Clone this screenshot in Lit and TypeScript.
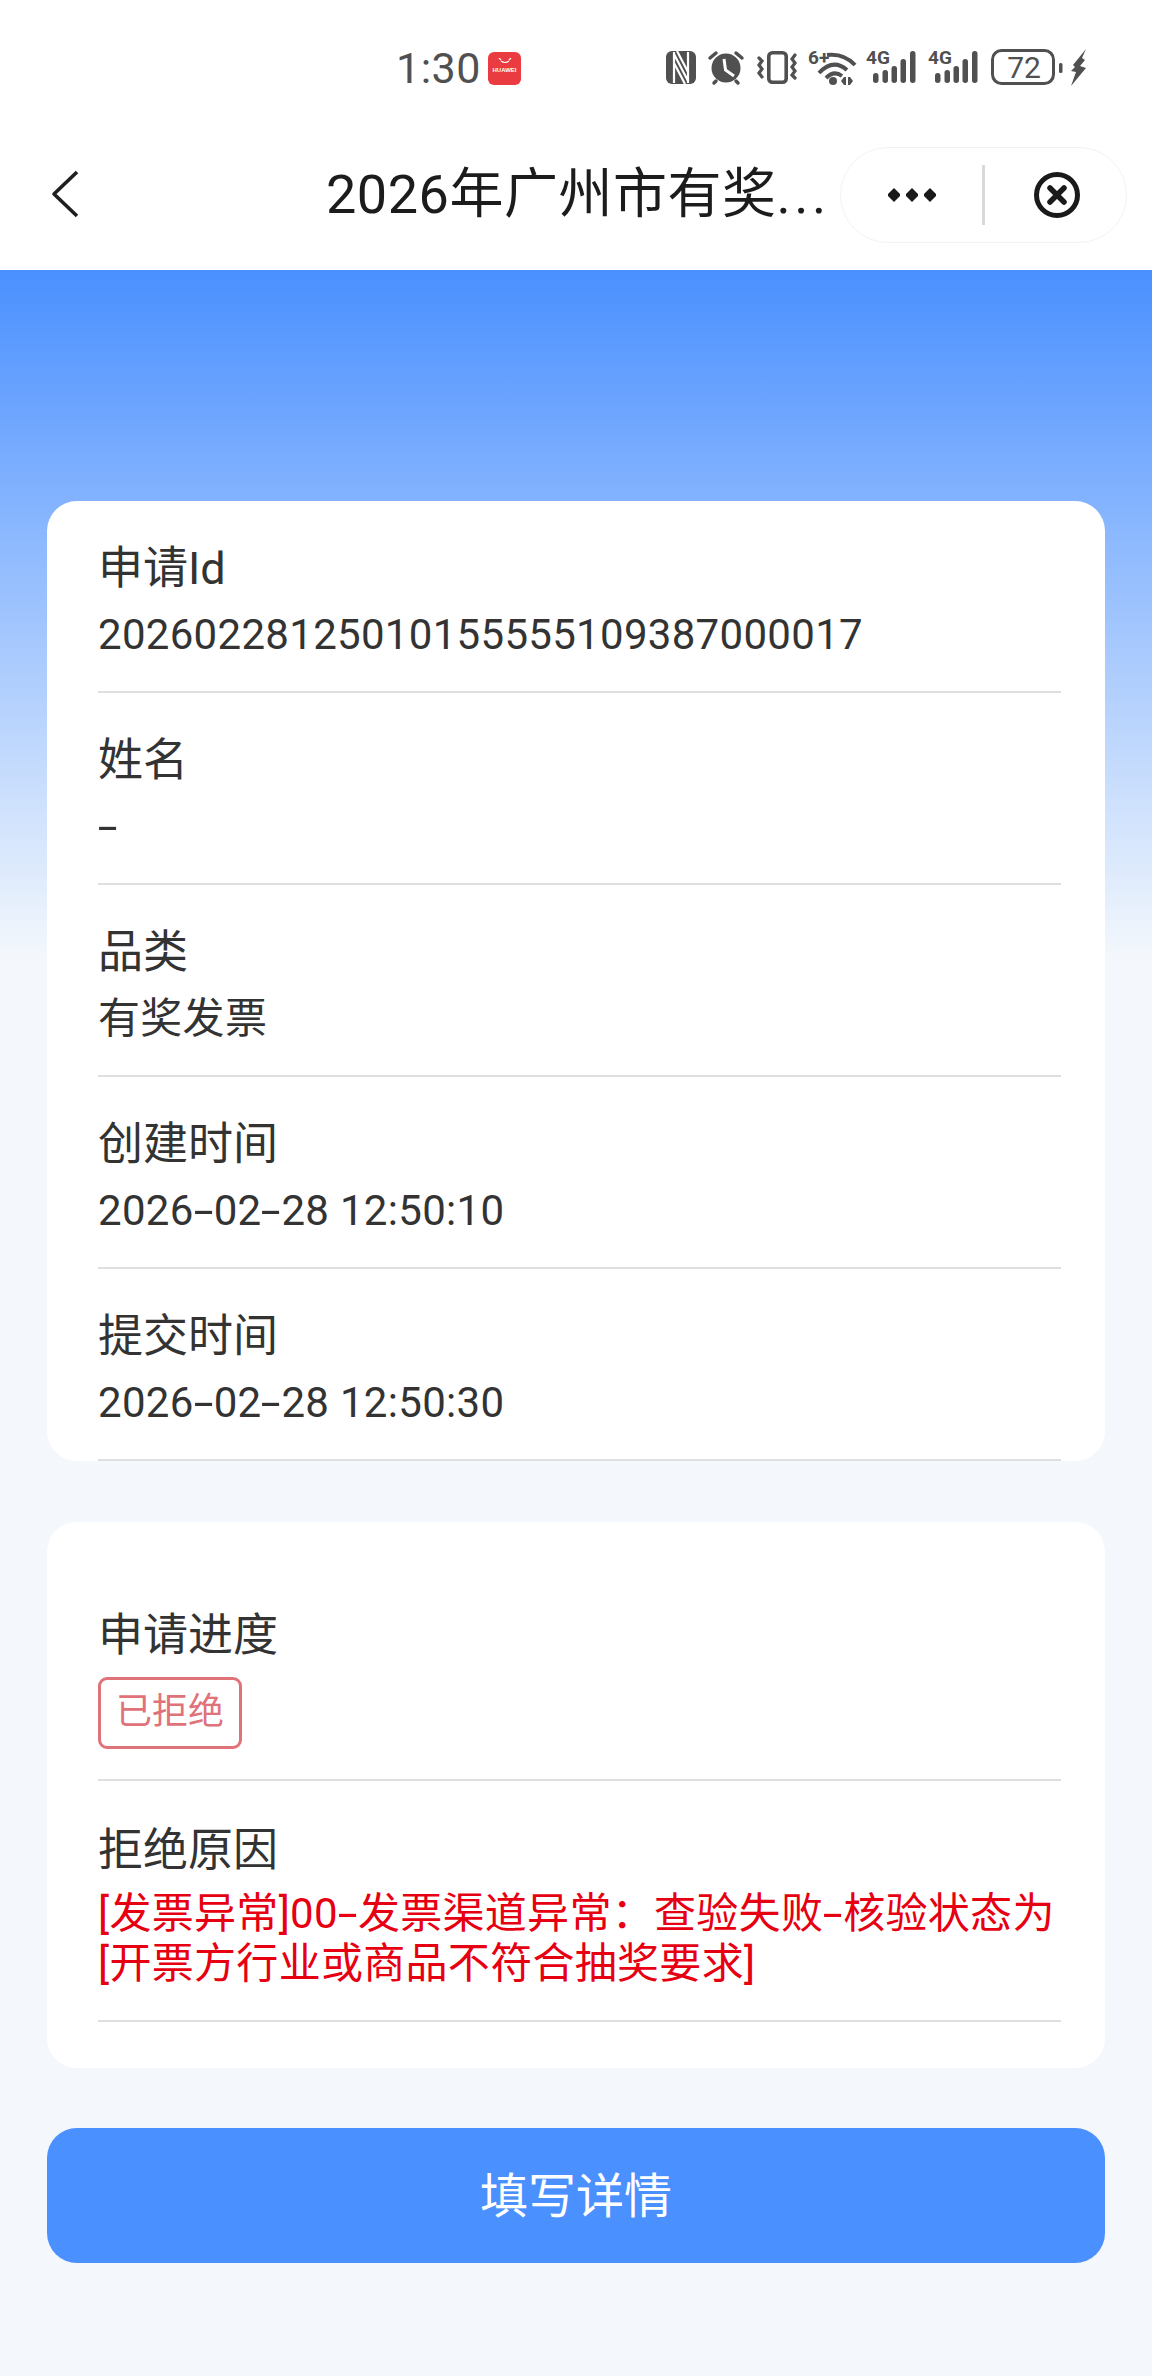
import { LitElement, html, css } from "lit";
import { customElement } from "lit/decorators.js";

const rows = [
  ["申请Id", "20260228125010155555109387000017"],
  ["姓名", "-"],
  ["品类", "有奖发票"],
  ["创建时间", "2026-02-28 12:50:10"],
  ["提交时间", "2026-02-28 12:50:30"],
];

const hy = (s: string) =>
  s.split("-").flatMap((p, i) => (i === 0 ? [p] : [html`<span class="hy">-</span>`, p]));

@customElement("app-root")
export class AppRoot extends LitElement {
  static styles = css`
    :host {
      display: block;
      width: 1152px;
      height: 2376px;
      overflow: hidden;
      background: #f4f8fc;
      font-family: Roboto, "Noto Sans CJK SC", sans-serif;
      color: #333;
    }
    * { box-sizing: border-box; }
    .head { background: #fff; height: 270px; }
    .status {
      height: 130px;
      padding: 50px 0 0 396px;
      display: flex;
      align-items: flex-start;
      color: #505050;
    }
    .time { font-size: 43px; line-height: 36px; width: 92px; letter-spacing: 0.5px; }
    .hw {
      width: 33px; height: 33px; margin-top: 2px; border-radius: 6px;
      background: #ea3b40; display: flex; flex-direction: column; align-items: center;
      color: #fff; font-size: 6px; line-height: 7px; font-weight: 700; padding-top: 6px;
      font-family: "Liberation Sans", sans-serif; white-space: nowrap;
    }
    .hw svg { display: block; margin-bottom: 3px; }
    .icons { margin-left: 145px; display: flex; align-items: flex-start; }
    .icons svg { display: block; flex: none; color: #505050; overflow: visible; }
    .i-nfc { margin-top: 1px; }
    .i-al { margin-left: 12px; }
    .i-vib { margin-left: 12px; margin-top: 1px; }
    .i-wifi { margin-left: 10px; }
    .i-sig1 { margin-left: 10px; }
    .i-sig2 { margin-left: 12px; }
    .i-bat { margin-left: 13px; margin-top: -1px; }
    .i-bolt { margin-left: 4px; margin-top: -2px; }
    .nav {
      height: 140px;
      display: flex;
      align-items: center;
      padding-left: 51px;
    }
    .back { display: block; flex: none; margin-top: -12px; }
    .title {
      margin-left: 247px;
      width: 514px;
      flex: none;
      font-size: 54px;
      line-height: 60px;
      margin-top: -10px;
      color: #1c1c1c;
      white-space: nowrap;
      letter-spacing: 0.5px;
    }
    .title span { letter-spacing: 3.5px; }
    .cap {
      width: 287px;
      height: 96px;
      margin-top: -10px;
      flex: none;
      border: 1.5px solid #f3f3f3;
      border-radius: 48px;
      display: flex;
      align-items: center;
    }
    .cap .dots { margin-left: 46px; display: block; }
    .cap .sep { margin-left: 45px; width: 3px; height: 60px; background: #d9d9d9; }
    .cap .x { margin-left: 48px; display: block; }
    .body {
      padding: 231px 47px 0;
      height: 2106px;
      background: linear-gradient(180deg, #4a90ff 0, #f4f8fc 690px);
    }
    .card { background: #fff; border-radius: 30px; padding: 0 44px 0 51px; }
    .row { padding: 35px 0 23px; border-bottom: 2px solid #dfdfdf; }
    .row:first-child { padding-top: 34.5px; padding-bottom: 23px; }
    .label { font-size: 45px; line-height: 66px; color: #333; }
    .value { font-size: 42px; line-height: 66px; color: #333; white-space: nowrap; letter-spacing: 0.3px; }
    .hy {
      display: inline-block;
      width: 20px;
      text-align: center;
      transform: scaleX(1.7);
    }
    .c2 { margin-top: 61px; height: 546px; padding-top: 81px; }
    .c2 .r1 { height: 178.5px; padding: 0; }
    .tag {
      display: block;
      margin-top: 8px;
      width: 144px; height: 72px;
      border: 3px solid #e0727a;
      border-radius: 9px;
      color: #e0727a;
      font-size: 36px;
      line-height: 64px;
      text-align: center;
    }
    .c2 .r2 { padding: 37px 0 0; height: 240.5px; }
    .red { color: #e60012; font-size: 42px; line-height: 50px; margin-top: 5px; white-space: nowrap; letter-spacing: 0.3px; }
    .btn {
      margin-top: 60px;
      height: 135px;
      padding-bottom: 6px;
      border-radius: 30px;
      background: #4a90ff;
      color: #fff;
      font-size: 48px;
      display: flex;
      align-items: center;
      justify-content: center;
    }
  `;

  render() {
    const signal = (cls: string) => html`<svg class=${cls} width="50" height="34" viewBox="0 0 50 34">
      <text x="0" y="14" font-size="19" font-weight="700" font-family="Roboto, sans-serif" fill="currentColor">4G</text>
      <rect x="7" y="23" width="5.500" height="10" rx="2.700" fill="currentColor"></rect>
      <rect x="16.500" y="20" width="5.500" height="13" rx="2.700" fill="currentColor"></rect>
      <rect x="25.500" y="16" width="5.500" height="17" rx="2.700" fill="currentColor"></rect>
      <rect x="34.500" y="9" width="5.500" height="24" rx="2.700" fill="currentColor"></rect>
      <rect x="44" y="1" width="5.500" height="32" rx="2.700" fill="currentColor"></rect>
    </svg>`;
    return html`
      <div class="head">
        <div class="status">
          <div class="time">1:30</div>
          <div class="hw">
            <svg width="14" height="6" viewBox="0 0 14 6"><path d="M1 0l2 2M13 0l-2 2M3 3q4 3 8 0" fill="none" stroke="#fff" stroke-width="1.200"></path></svg>
            <span>HUAWEI</span>
          </div>
          <div class="icons">
            <svg class="i-nfc" width="30" height="33" viewBox="0 0 30 33">
              <rect width="30" height="33" rx="6" fill="currentColor"></rect>
              <path fill="none" stroke="#fff" stroke-width="2.200" d="M8 1v31M22 1v31M8 3l14 27M8 12l11 21M22 21L11 0"></path>
            </svg>
            <svg class="i-al" width="36" height="35" viewBox="0 0 36 35">
              <circle cx="18" cy="18" r="14.500" fill="currentColor"></circle>
              <path fill="none" stroke="#fff" stroke-width="3" d="M16 9l1.500 11L26 26"></path>
              <path fill="none" stroke="currentColor" stroke-width="3.500" stroke-linecap="round" d="M2 8l6-5M34 8l-6-5M8 31l-2 2M28 31l2 2"></path>
            </svg>
            <svg class="i-vib" width="42" height="33" viewBox="0 0 42 33">
              <rect x="12.800" y="1.800" width="17.400" height="29.400" rx="3.500" fill="none" stroke="currentColor" stroke-width="3.600"></rect>
              <path fill="none" stroke="currentColor" stroke-width="3.200" stroke-linecap="round" d="M3 7l3 3-3 4 3 4-3 4 3 4M39 4l-3 4 3 4-3 4 3 4-3 4 3 3"></path>
            </svg>
            <svg class="i-wifi" width="48" height="36" viewBox="0 0 48 36">
              <text x="0" y="14" font-size="19" font-weight="700" font-family="Roboto, sans-serif" fill="currentColor">6+</text>
              <path fill="none" stroke="currentColor" stroke-width="4" d="M19 5Q36 3 47 15M11 23Q25 8 39 20M18 28Q26 20 34 26"></path>
              <circle cx="25" cy="31" r="4" fill="currentColor"></circle>
              <path fill="currentColor" d="M36 27h2v8h-2l-3-4zM40 27h2l3 4-3 4h-2z"></path>
            </svg>
            ${signal("i-sig1")}
            ${signal("i-sig2")}
            <svg class="i-bat" width="64" height="36" viewBox="0 0 64 36">
              <rect x="1.500" y="1.500" width="61" height="33" rx="9" fill="none" stroke="currentColor" stroke-width="3"></rect>
              <text x="33" y="29" font-size="30" text-anchor="middle" font-family="Roboto, sans-serif" fill="currentColor">72</text>
            </svg>
            <svg class="i-bolt" width="28" height="39" viewBox="0 0 28 39">
              <rect x="0" y="15" width="3.500" height="10" rx="1.500" fill="currentColor"></rect>
              <path fill="currentColor" d="M27 1L14 17l2 2-4 4 5 1-5 14 15-18-6-2 5-6-3-2z"></path>
            </svg>
          </div>
        </div>
        <div class="nav">
          <svg class="back" width="28" height="48" viewBox="0 0 28 48"><path d="M26 2L3 24l23 22" fill="none" stroke="#1f1f1f" stroke-width="3.600" stroke-linejoin="round"></path></svg>
          <div class="title">2026年广州市有奖<span>...</span></div>
          <div class="cap">
            <svg class="dots" width="50" height="14" viewBox="0 0 50 14" fill="#1a1a1a">
              <path d="M7 0l6 6v2l-6 6-6-6V6z"></path><path d="M25 0l6 6v2l-6 6-6-6V6z"></path><path d="M43 0l6 6v2l-6 6-6-6V6z"></path>
            </svg>
            <div class="sep"></div>
            <svg class="x" width="48" height="48" viewBox="0 0 48 48">
              <circle cx="24" cy="24" r="20.500" fill="none" stroke="#1a1a1a" stroke-width="5"></circle>
              <path d="M17 17l14 14M31 17L17 31" fill="none" stroke="#1a1a1a" stroke-width="5.500" stroke-linecap="round"></path>
            </svg>
          </div>
        </div>
      </div>
      <div class="body">
        <div class="card">
          ${rows.map(([l, v]) => html`<div class="row"><div class="label">${l}</div><div class="value">${hy(v)}</div></div>`)}
        </div>
        <div class="card c2">
          <div class="row r1"><div class="label">申请进度</div><div class="tag">已拒绝</div></div>
          <div class="row r2">
            <div class="label">拒绝原因</div>
            <div class="red">[发票异常]00${hy("-")}发票渠道异常：查验失败${hy("-")}核验状态为<br />[开票方行业或商品不符合抽奖要求]</div>
          </div>
        </div>
        <div class="btn">填写详情</div>
      </div>
    `;
  }
}
